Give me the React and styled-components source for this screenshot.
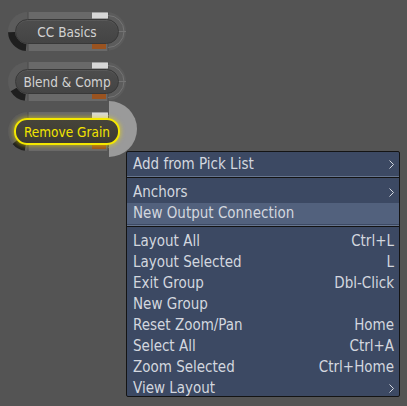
import React from "react";
import styled, { createGlobalStyle } from "styled-components";

// Styles

const GlobalStyle = createGlobalStyle`
  html, body {
    margin: 0;
    padding: 0;
    background: #545454;
  }
  body {
    font-family: "DejaVu Sans Condensed", "DejaVu Sans", "Liberation Sans", sans-serif;
    font-stretch: condensed;
  }
`;

const Canvas = styled.div`
  position: relative;
  width: 407px;
  height: 406px;
  overflow: hidden;
  background: #545454;
`;

const NodeColumn = styled.div`
  display: flex;
  flex-direction: column;
  align-items: flex-start;
  gap: 11px;
  padding: 12px 0 0 8px;
`;

const NodeShell = styled.div`
  position: relative;
  width: 118px;
  height: 39px;
  box-sizing: border-box;
  padding: 7px;
  display: flex;
`;

const NodeArt = styled.svg`
  position: absolute;
  left: 0;
  top: 0;
  overflow: visible;
`;

const Pill = styled.div`
  position: relative;
  flex: 1;
  display: flex;
  align-items: center;
  justify-content: center;
  box-sizing: border-box;
  border-radius: 13px;
  font-size: 13.5px;
  white-space: nowrap;
  margin: ${(p) => (p.$selected ? "-1px" : "0")};
  border: ${(p) => (p.$selected ? "2px solid #f4e800" : "1px solid #383838")};
  background: ${(p) =>
    p.$selected
      ? "linear-gradient(#46443a, #3c3a32)"
      : "linear-gradient(#4d4d4d, #444444)"};
  color: ${(p) => (p.$selected ? "#f2e400" : "#d2d2d2")};
  box-shadow: ${(p) =>
    p.$selected
      ? "0 0 4px 1px rgba(235, 215, 0, 0.55)"
      : "inset 0 1px 0 rgba(255, 255, 255, 0.07)"};
`;

const Menu = styled.div`
  position: absolute;
  left: 126px;
  top: 151px;
  width: 274px;
  height: 246px;
  box-sizing: border-box;
  overflow: hidden;
  background: #3c4963;
  border: 1px solid #141414;
  border-radius: 2px;
  color: #d3d7df;
  font-size: 15px;
`;

const Section = styled.div`
  padding: ${(p) => p.$pad};
`;

const Divider = styled.div`
  border-top: 1px solid #66758f;
  border-bottom: 1px solid #131313;
`;

const Item = styled.div`
  display: flex;
  align-items: center;
  justify-content: space-between;
  height: 21px;
  line-height: 21px;
  padding: 0 5px 0 6px;
  white-space: nowrap;
  background: ${(p) => (p.$active ? "#52617d" : "transparent")};
`;

const Shortcut = styled.span`
  display: flex;
  align-items: center;
`;

// Parts

function arcSector(cx, cy, rOut, rIn, a0, a1) {
  const rad = (a) => (a * Math.PI) / 180;
  const p = (r, a) => `${cx + r * Math.cos(rad(a))},${cy + r * Math.sin(rad(a))}`;
  return `M${p(rOut, a0)} A${rOut},${rOut} 0 0 0 ${p(rOut, a1)} L${p(rIn, a1)} A${rIn},${rIn} 0 0 1 ${p(rIn, a0)} Z`;
}

const Node = ({ label, dark, selected }) => (
  <NodeShell>
    <NodeArt width="118" height="39" viewBox="0 0 118 39">
      <rect x="0" y="0" width="118" height="39" rx="19.5" fill="#5c5c5c" />
      <rect x="20" y="0" width="80" height="7" fill="#696969" />
      <rect x="20" y="32" width="80" height="7" fill="#696969" />
      <line x1="20" y1="0" x2="20" y2="7" stroke="#4b4b4b" />
      <line x1="20" y1="32" x2="20" y2="39" stroke="#4b4b4b" />
      <line x1="100" y1="0" x2="100" y2="7" stroke="#4b4b4b" />
      <line x1="100" y1="32" x2="100" y2="39" stroke="#4b4b4b" />
      <path d={arcSector(19.5, 19.5, 19.5, 12.5, dark[0], dark[1])} fill="#1f1f1f" />
      <rect x="84" y="0.5" width="16" height="6" fill="#d8d8d8" />
      <rect x="84" y="31" width="14" height="6" fill="#9a5320" />
      <path d="M100,3.5 A16,16 0 0 1 100,35.5" fill="none" stroke="#747474" />
      <line x1="110" y1="19.5" x2="118" y2="19.5" stroke="#747474" />
      {selected && <path d="M101,-11 A28,28 0 0 1 101,45 Z" fill="#9a9a9a" />}
    </NodeArt>
    <Pill $selected={selected}>{label}</Pill>
  </NodeShell>
);

const Chevron = () => (
  <svg width="5" height="9" viewBox="0 0 5 9">
    <polyline points="0.5,0.5 4.5,4.5 0.5,8.5" fill="none" stroke="#d3d7df" strokeWidth="1" />
  </svg>
);

const MenuItem = ({ label, shortcut, sub, active }) => (
  <Item $active={active}>
    <span>{label}</span>
    <Shortcut>{sub ? <Chevron /> : shortcut}</Shortcut>
  </Item>
);

const layoutItems = [
  ["Layout All", "Ctrl+L"],
  ["Layout Selected", "L"],
  ["Exit Group", "Dbl-Click"],
  ["New Group", ""],
  ["Reset Zoom/Pan", "Home"],
  ["Select All", "Ctrl+A"],
  ["Zoom Selected", "Ctrl+Home"],
];

export default function App() {
  return (
    <Canvas>
      <GlobalStyle />
      <NodeColumn>
        <Node label="CC Basics" dark={[178, 95]} />
        <Node label="Blend & Comp" dark={[150, 98]} />
        <Node label="Remove Grain" dark={[140, 98]} selected />
      </NodeColumn>
      <Menu>
        <Section $pad="2px 0 1px">
          <MenuItem label="Add from Pick List" sub />
        </Section>
        <Divider />
        <Section $pad="4px 0 1px">
          <MenuItem label="Anchors" sub />
          <MenuItem label="New Output Connection" active />
        </Section>
        <Divider />
        <Section $pad="4px 0 0">
          {layoutItems.map(([label, key]) => (
            <MenuItem key={label} label={label} shortcut={key} />
          ))}
          <MenuItem label="View Layout" sub />
        </Section>
      </Menu>
    </Canvas>
  );
}
